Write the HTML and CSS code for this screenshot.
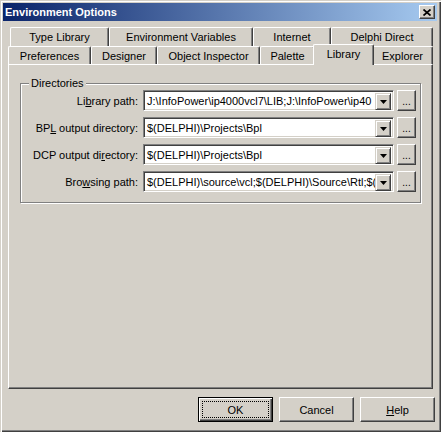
FILE: index.html
```html
<!DOCTYPE html>
<html>
<head>
<meta charset="utf-8">
<title>Environment Options</title>
<link rel="stylesheet" href="styles.css">
</head>
<body>
<div class="window">
  <div class="titlebar">
    <span class="title">Environment Options</span>
    <button class="close" type="button" aria-label="Close">
      <svg width="8" height="7" viewBox="0 0 8 7"><path d="M0.5 0.5L7.5 6.5M7.5 0.5L0.5 6.5" stroke="#000" stroke-width="1.7" fill="none"/></svg>
    </button>
  </div>

  <div class="tabrow back">
    <div class="tab w-typelib">Type Library</div>
    <div class="tab w-envvars">Environment Variables</div>
    <div class="tab w-internet">Internet</div>
    <div class="tab w-direct">Delphi Direct</div>
  </div>
  <div class="tabrow front">
    <div class="tab w-prefs">Preferences</div>
    <div class="tab w-designer">Designer</div>
    <div class="tab w-inspector">Object Inspector</div>
    <div class="tab w-palette">Palette</div>
    <div class="tab w-library active">Library</div>
    <div class="tab w-explorer">Explorer</div>
  </div>

  <div class="page">
    <div class="group">
      <span class="legend">Directories</span>
      <div class="row">
        <label class="label">Li<u>b</u>rary path:</label>
        <div class="combo"><span class="value">J:\InfoPower\ip4000vcl7\LIB;J:\InfoPower\ip40</span><span class="drop"><svg width="7" height="4" viewBox="0 0 7 4"><path d="M0 0H7L3.5 4Z" fill="#000"/></svg></span></div>
        <button class="browse" type="button">...</button>
      </div>
      <div class="row">
        <label class="label">BP<u>L</u> output directory:</label>
        <div class="combo"><span class="value">$(DELPHI)\Projects\Bpl</span><span class="drop"><svg width="7" height="4" viewBox="0 0 7 4"><path d="M0 0H7L3.5 4Z" fill="#000"/></svg></span></div>
        <button class="browse" type="button">...</button>
      </div>
      <div class="row">
        <label class="label">DCP output di<u>r</u>ectory:</label>
        <div class="combo"><span class="value">$(DELPHI)\Projects\Bpl</span><span class="drop"><svg width="7" height="4" viewBox="0 0 7 4"><path d="M0 0H7L3.5 4Z" fill="#000"/></svg></span></div>
        <button class="browse" type="button">...</button>
      </div>
      <div class="row">
        <label class="label">Bro<u>w</u>sing path:</label>
        <div class="combo"><span class="value">$(DELPHI)\source\vcl;$(DELPHI)\Source\Rtl;$(</span><span class="drop"><svg width="7" height="4" viewBox="0 0 7 4"><path d="M0 0H7L3.5 4Z" fill="#000"/></svg></span></div>
        <button class="browse" type="button">...</button>
      </div>
    </div>
  </div>

  <div class="actions">
    <button class="btn default" type="button"><span class="focus">OK</span></button>
    <button class="btn" type="button">Cancel</button>
    <button class="btn" type="button"><u>H</u>elp</button>
  </div>
</div>
</body>
</html>
```

FILE: styles.css
```css
* { box-sizing: border-box; }

html, body {
  margin: 0;
  padding: 0;
}

body {
  background: #d4d0c8;
  font: 11px "Liberation Sans", Arial, sans-serif;
  color: #000;
}

button {
  font: inherit;
  color: inherit;
}

/* Dialog frame with the classic 3D border */
.window {
  width: 441px;
  height: 432px;
  background: #d4d0c8;
  padding: 3px 4px 0 3px;
  display: flex;
  flex-direction: column;
  box-shadow:
    inset 1px 1px 0 #d4d0c8,
    inset 2px 2px 0 #ffffff,
    inset -1px -1px 0 #404040,
    inset -2px -2px 0 #808080;
}

.titlebar {
  height: 18px;
  background: linear-gradient(to right, #0a246a, #a6caf0);
  display: flex;
  align-items: center;
  justify-content: space-between;
  padding: 0 2px 0 2px;
}

.title {
  color: #fff;
  font-weight: bold;
}

.close {
  width: 16px;
  height: 14px;
  padding: 0;
  border: 1px solid;
  border-color: #fff #404040 #404040 #fff;
  background: #d4d0c8;
  box-shadow: inset -1px -1px 0 #808080;
  display: flex;
  align-items: center;
  justify-content: center;
}

/* Tab strip: two rows, the front one holds the selected tab */
.tabrow {
  display: flex;
}

.tabrow.back {
  margin: 6px 0 0 7px;
  height: 19px;
}

.tabrow.front {
  margin-left: 5px;
  height: 18px;
}

.tab {
  height: 100%;
  background: #d4d0c8;
  border-top: 1px solid #fff;
  border-left: 1px solid #fff;
  border-right: 1px solid #404040;
  border-radius: 2px 2px 0 0;
  box-shadow: inset -1px 0 0 #808080;
  text-align: center;
  white-space: nowrap;
  padding-top: 3px;
}

.tab.active {
  position: relative;
  z-index: 1;
  height: 21px;
  margin: -2px -2px 0;
  padding-top: 3px;
}

.w-typelib { width: 99px; }
.w-envvars { width: 144px; }
.w-internet { width: 78px; }
.w-direct { width: 102px; }
.w-prefs { width: 83px; }
.w-designer { width: 66px; }
.w-inspector { width: 103px; }
.w-palette { width: 55px; }
.w-library { width: 57px; }
.w-library.active { width: 61px; }
.w-explorer { width: 61px; }

/* Tab page */
.page {
  margin-left: 5px;
  width: 425px;
  height: 325px;
  border-top: 1px solid #fff;
  border-left: 1px solid #fff;
  border-right: 1px solid #404040;
  border-bottom: 1px solid #404040;
  box-shadow: inset -1px -1px 0 #808080;
  padding: 18px 0 0 11px;
}

/* Etched group box */
.group {
  position: relative;
  width: 401px;
  height: 120px;
  border: 1px solid #808080;
  box-shadow: inset 1px 1px 0 #fff, 1px 1px 0 #fff;
  padding-top: 6px;
  display: flex;
  flex-direction: column;
  gap: 6px;
}

.legend {
  position: absolute;
  top: -7px;
  left: 8px;
  padding: 0 2px;
  background: #d4d0c8;
  line-height: 13px;
}

.row {
  display: flex;
  align-items: center;
  height: 21px;
}

.label {
  width: 117px;
  margin-right: 5px;
  text-align: right;
  white-space: nowrap;
}

/* Sunken combo box with its drop-down button */
.combo {
  width: 251px;
  height: 21px;
  background: #fff;
  border: 1px solid;
  border-color: #808080 #fff #fff #808080;
  box-shadow: inset 1px 1px 0 #404040, inset -1px -1px 0 #d4d0c8;
  padding: 2px;
  display: flex;
  align-items: stretch;
}

.value {
  flex: 1;
  min-width: 0;
  overflow: hidden;
  white-space: nowrap;
  line-height: 17px;
  padding-left: 1px;
}

.drop {
  width: 16px;
  height: 17px;
  flex: none;
  background: #d4d0c8;
  border: 1px solid;
  border-color: #d4d0c8 #404040 #404040 #d4d0c8;
  box-shadow: inset 1px 1px 0 #fff, inset -1px -1px 0 #808080;
  display: flex;
  align-items: center;
  justify-content: center;
}

.browse {
  width: 19px;
  height: 21px;
  margin-left: 3px;
  padding: 0 0 3px;
  border: 1px solid;
  border-color: #fff #404040 #404040 #fff;
  background: #d4d0c8;
  box-shadow: inset -1px -1px 0 #808080;
  font-size: 10px;
  line-height: 1;
  display: flex;
  align-items: flex-end;
  justify-content: center;
}

/* Dialog buttons */
.actions {
  display: flex;
  justify-content: flex-end;
  gap: 6px;
  margin-top: 8px;
  padding-right: 2px;
}

.btn {
  width: 75px;
  height: 25px;
  padding: 0;
  background: #d4d0c8;
  border: 1px solid;
  border-color: #fff #404040 #404040 #fff;
  box-shadow: inset -1px -1px 0 #808080;
  display: flex;
  align-items: center;
  justify-content: center;
}

.btn.default {
  border: 1px solid #000;
  box-shadow:
    inset 1px 1px 0 #fff,
    inset -1px -1px 0 #404040,
    inset -2px -2px 0 #808080;
  padding: 3px;
}

.focus {
  width: 100%;
  height: 100%;
  border: 1px dotted #000;
  display: flex;
  align-items: center;
  justify-content: center;
}
```
